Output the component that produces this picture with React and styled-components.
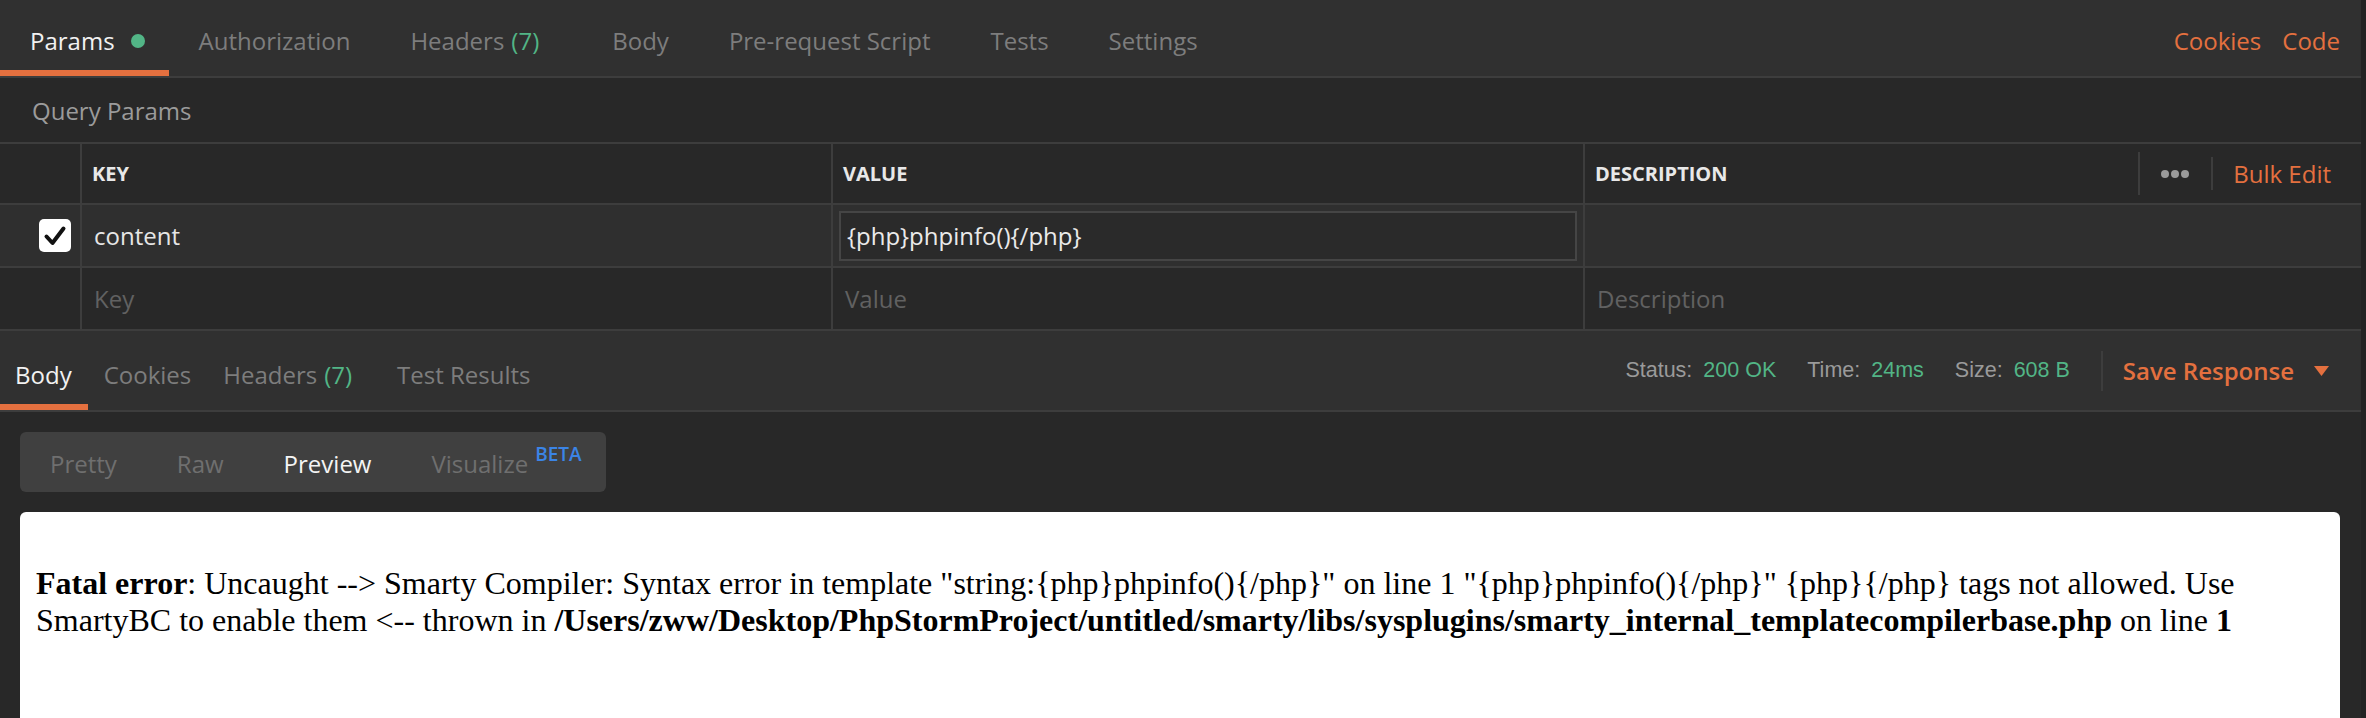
import styled, { createGlobalStyle, css } from "styled-components";

const GlobalStyle = createGlobalStyle`
  html, body {
    margin: 0;
    padding: 0;
    background: #282828;
  }
  body {
    font-family: "Open Sans", "Liberation Sans", sans-serif;
  }
`;

const ORANGE = "#e4703f";
const GREEN = "#52b586";

const Page = styled.div`
  width: 2366px;
  height: 718px;
  box-sizing: border-box;
  background: #282828;
  border-right: 5px solid #232323;
  overflow: hidden;
`;

const TabBar = styled.div`
  display: flex;
  align-items: stretch;
  height: ${(p) => p.$height}px;
  background: #303030;
  border-bottom: 2px solid #3d3d3d;
`;

const Tab = styled.div`
  position: relative;
  display: flex;
  align-items: center;
  padding: ${(p) => p.$pt}px ${(p) => p.$px}px 0;
  font-size: 24px;
  color: ${(p) => (p.$active ? "#f2f2f2" : "#7d7d7d")};
  white-space: nowrap;
  &:first-child {
    padding-left: ${(p) => p.$first}px;
  }
  ${(p) =>
    p.$active &&
    css`
      &::after {
        content: "";
        position: absolute;
        left: 0;
        right: 0;
        bottom: 0;
        height: 6px;
        background: ${ORANGE};
      }
    `}
`;

const Count = styled.span`
  color: ${GREEN};
  margin-left: 7px;
  margin-right: 13px;
`;

const Dot = styled.span`
  width: 14px;
  height: 14px;
  border-radius: 50%;
  background: ${GREEN};
  margin-left: 16px;
  margin-right: -6px;
`;

const RightLinks = styled.div`
  margin-left: auto;
  display: flex;
  align-items: center;
  gap: 21px;
  padding: 5px 21px 0 0;
  font-size: 24px;
  color: ${ORANGE};
`;

const SectionTitle = styled.div`
  height: 64px;
  display: flex;
  align-items: center;
  padding-left: 32px;
  font-size: 24px;
  color: #9b9b9b;
`;

const Table = styled.div`
  display: grid;
  grid-template-columns: 82px 751px 752px 1fr;
  border-top: 2px solid #3d3d3d;
`;

const Cell = styled.div`
  box-sizing: border-box;
  height: ${(p) => (p.$head ? 61 : 63)}px;
  display: flex;
  align-items: center;
  padding: 0 ${(p) => (p.$head ? 10 : 12)}px;
  border-bottom: 2px solid #3d3d3d;
  border-right: ${(p) => (p.$last ? "none" : "2px solid #3d3d3d")};
  background: ${(p) => (p.$hl ? "#2f2f2f" : "#282828")};
  font-size: ${(p) => (p.$head ? 20 : 24)}px;
  font-weight: ${(p) => (p.$head ? 700 : 400)};
  color: ${(p) => (p.$head ? "#e8e8e8" : p.$muted ? "#616161" : "#e6e6e6")};
`;

const CheckCell = styled(Cell)`
  justify-content: flex-end;
  padding: 0 9px 0 0;
`;

const CheckBox = styled.div`
  width: 32px;
  height: 33px;
  border-radius: 5px;
  background: #ffffff;
  display: flex;
  align-items: center;
  justify-content: center;
`;

const ValueInput = styled.div`
  flex: 1;
  box-sizing: border-box;
  height: 50px;
  margin: 0 -6px 0 -6px;
  padding: 0 6px;
  display: flex;
  align-items: center;
  border: 2px solid #454545;
  background: #2a2a2a;
  color: #eaeaea;
`;

const HeadTools = styled.div`
  margin-left: auto;
  display: flex;
  align-items: center;
  height: 100%;
  margin-right: 20px;
`;

const VSep = styled.div`
  width: 2px;
  height: ${(p) => p.$h}px;
  background: #3d3d3d;
`;

const Dots = styled.div`
  display: flex;
  gap: 2px;
  margin: 0 22px 0 21px;
  span {
    width: 8px;
    height: 8px;
    border-radius: 50%;
    background: #9a9a9a;
  }
`;

const BulkEdit = styled.div`
  margin-left: 20px;
  font-size: 24px;
  font-weight: 400;
  color: ${ORANGE};
`;

const StatusArea = styled.div`
  margin-left: auto;
  display: flex;
  align-items: center;
  padding-right: 32px;
  font-family: "Liberation Sans", Arial, sans-serif;
  font-size: 21.5px;
`;

const StatusItem = styled.div`
  display: flex;
  gap: 11px;
  margin-right: 31px;
  color: #9a9a9a;
  b {
    font-weight: 400;
    color: ${GREEN};
  }
`;

const SaveButton = styled.div`
  display: flex;
  align-items: center;
  margin-left: 20px;
  font-family: "Open Sans", sans-serif;
  font-size: 24px;
  font-weight: 600;
  color: ${ORANGE};
  svg {
    margin-left: 20px;
  }
`;

const ModeBar = styled.div`
  display: inline-flex;
  align-items: center;
  height: 60px;
  margin: 20px 0 20px 20px;
  border-radius: 6px;
  background: #404040;
`;

const ModeItem = styled.div`
  display: flex;
  align-items: flex-start;
  padding: 3px 30px 0;
  font-size: 24px;
  color: ${(p) => (p.$active ? "#f4f4f4" : "#6f6f6f")};
  &:last-child {
    padding-right: 24px;
  }
`;

const Beta = styled.sup`
  margin-left: 7px;
  margin-top: -2px;
  font-size: 19px;
  font-weight: 600;
  color: #3b84e6;
  line-height: 1;
`;

const Preview = styled.div`
  margin: 0 21px 0 20px;
  height: 260px;
  border-radius: 6px 6px 0 0;
  background: #ffffff;
  padding: 16px;
  font-family: "Liberation Serif", "Times New Roman", serif;
  font-size: 32px;
  line-height: 37px;
  color: #000;
`;

const topTabs = [
  { label: "Params", active: true, dot: true },
  { label: "Authorization" },
  { label: "Headers", count: 7 },
  { label: "Body" },
  { label: "Pre-request Script" },
  { label: "Tests" },
  { label: "Settings" },
];

const responseTabs = [
  { label: "Body", active: true },
  { label: "Cookies" },
  { label: "Headers", count: 7 },
  { label: "Test Results" },
];

const modes = ["Pretty", "Raw", "Preview", "Visualize"];

function Check() {
  return (
    <svg width="24" height="24" viewBox="0 0 24 24">
      <path d="M3.5 12.5 L9.5 19 L20.5 4.5" fill="none" stroke="#111" strokeWidth="4" strokeLinecap="round" strokeLinejoin="round" />
    </svg>
  );
}

export default function App() {
  return (
    <>
      <GlobalStyle />
      <Page>
        <TabBar $height={76}>
          {topTabs.map((t) => (
            <Tab key={t.label} $active={t.active} $pt={5} $px={30} $first={30}>
              {t.label}
              {t.count && <Count>({t.count})</Count>}
              {t.dot && <Dot />}
            </Tab>
          ))}
          <RightLinks>
            <span>Cookies</span>
            <span>Code</span>
          </RightLinks>
        </TabBar>

        <SectionTitle>Query Params</SectionTitle>

        <Table>
          <Cell $head />
          <Cell $head>KEY</Cell>
          <Cell $head>VALUE</Cell>
          <Cell $head $last>
            DESCRIPTION
            <HeadTools>
              <VSep $h={43} />
              <Dots>
                <span />
                <span />
                <span />
              </Dots>
              <VSep $h={33} />
              <BulkEdit>Bulk Edit</BulkEdit>
            </HeadTools>
          </Cell>

          <CheckCell $hl>
            <CheckBox>
              <Check />
            </CheckBox>
          </CheckCell>
          <Cell $hl>content</Cell>
          <Cell $hl>
            <ValueInput>{"{php}phpinfo(){/php}"}</ValueInput>
          </Cell>
          <Cell $hl $last />

          <Cell />
          <Cell $muted>Key</Cell>
          <Cell $muted>Value</Cell>
          <Cell $muted $last>Description</Cell>
        </Table>

        <TabBar $height={79}>
          {responseTabs.map((t) => (
            <Tab key={t.label} $active={t.active} $pt={7} $px={16} $first={15}>
              {t.label}
              {t.count && <Count>({t.count})</Count>}
            </Tab>
          ))}
          <StatusArea>
            <StatusItem>
              Status: <b>200 OK</b>
            </StatusItem>
            <StatusItem>
              Time: <b>24ms</b>
            </StatusItem>
            <StatusItem>
              Size: <b>608 B</b>
            </StatusItem>
            <VSep $h={40} />
            <SaveButton>
              Save Response
              <svg width="15" height="10" viewBox="0 0 15 10">
                <path d="M0 0 H15 L7.5 10 Z" fill={ORANGE} />
              </svg>
            </SaveButton>
          </StatusArea>
        </TabBar>

        <ModeBar>
          {modes.map((m) => (
            <ModeItem key={m} $active={m === "Preview"}>
              {m}
              {m === "Visualize" && <Beta>BETA</Beta>}
            </ModeItem>
          ))}
        </ModeBar>

        <Preview>
          <br />
          <b>Fatal error</b>: Uncaught --&gt; Smarty Compiler: Syntax error in template
          &quot;string:{"{php}phpinfo(){/php}"}&quot; on line 1 &quot;{"{php}phpinfo(){/php}"}&quot;{" "}
          {"{php}{/php}"} tags not allowed. Use SmartyBC to enable them &lt;-- thrown in{" "}
          <b>/Users/zww/Desktop/PhpStormProject/untitled/smarty/libs/sysplugins/smarty_internal_templatecompilerbase.php</b>{" "}
          on line <b>1</b>
        </Preview>
      </Page>
    </>
  );
}
